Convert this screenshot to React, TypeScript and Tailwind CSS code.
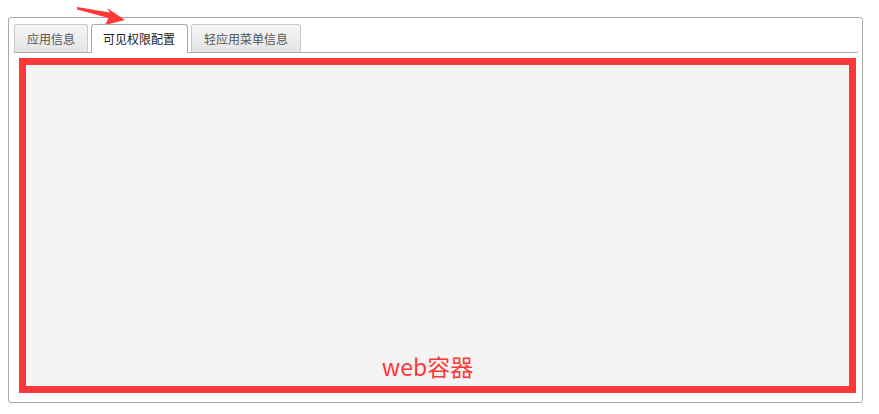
import React from "react";

const font = { fontFamily: '"Noto Sans CJK SC", "Microsoft YaHei", sans-serif' };

function Tab({ label, active }: { label: string; active?: boolean }) {
  if (active) {
    return (
      <div className="relative -mb-px flex h-[29px] items-center rounded-t-[3px] border border-b-0 border-[#aaaaaa] bg-white pl-[11px] pr-[12px] text-[12px] text-[#222]">
        {label}
      </div>
    );
  }
  return (
    <div className="flex h-[28px] items-center rounded-t-[3px] border border-b-0 border-[#c8c8c8] bg-gradient-to-b from-[#f6f6f6] to-[#e4e4e4] px-[12px] text-[12px] text-[#555]">
      {label}
    </div>
  );
}

export default function App() {
  return (
    <div className="relative h-[414px] w-[879px] bg-white" style={font}>
      <svg className="absolute left-0 top-0" width="140" height="30" viewBox="0 0 140 30">
        <polygon points="77,7 110,12.5 107,8 125,20 105,25 108.5,18 77,9.5" fill="#ff3838" />
      </svg>
      <div className="ml-[8px] pt-[17px]">
        <div className="flex h-[386px] w-[855px] flex-col rounded-[3px] border border-[#aaaaaa] p-[4px]">
          <div className="flex w-[846px] items-end gap-[3px] rounded-b-[3px] border-b border-[#aaaaaa] pl-[1px] pt-[2px]">
            <Tab label="应用信息" />
            <Tab label="可见权限配置" active />
            <Tab label="轻应用菜单信息" />
          </div>
          <div className="ml-[6px] mt-[5px] flex h-[335px] w-[837px] items-end justify-center border-[7px] border-[#fe3838] bg-[#f4f4f4] pb-[7px] pr-[20px]">
            <span className="text-[23px] leading-[26px] text-[#fe3838]">web容器</span>
          </div>
        </div>
      </div>
    </div>
  );
}
